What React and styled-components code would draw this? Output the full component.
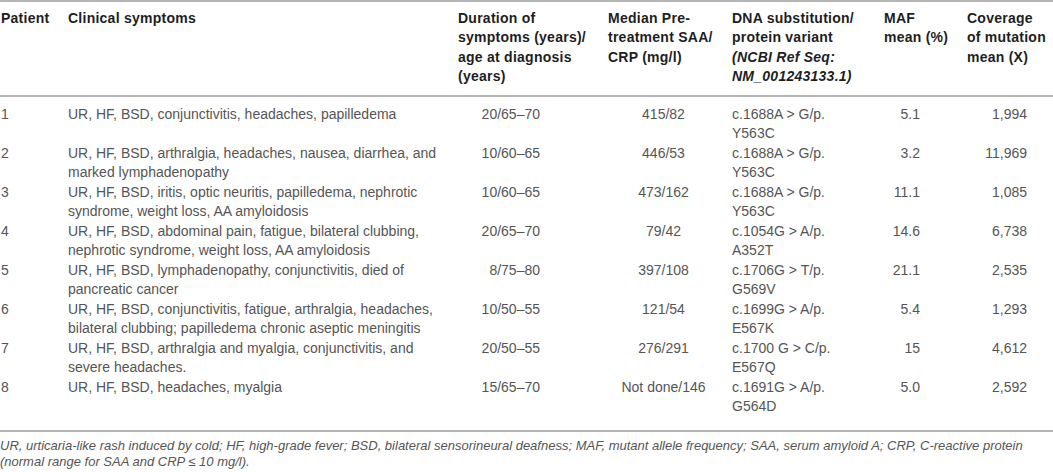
import React from "react";
import styled, { createGlobalStyle } from "styled-components";

const Global = createGlobalStyle`
  body {
    margin: 0;
    background: #fff;
    font-family: "Liberation Sans", Arial, sans-serif;
  }
`;

const COLS = "67px 390px 150px 124px 152px 83px 87px";

const Wrapper = styled.div`
  width: 1053px;
`;

const Table = styled.div`
  border-top: 2px solid #b4b4b4;
  border-bottom: 2px solid #b4b4b4;
`;

const HeaderRow = styled.div`
  display: grid;
  grid-template-columns: ${COLS};
  padding: 7px 0 8px;
  border-bottom: 2px solid #b4b4b4;
`;

const HeadCell = styled.div`
  font-size: 14px;
  font-weight: bold;
  letter-spacing: 0.25px;
  line-height: 19.4px;
  color: #1e1e1e;
  padding-left: ${(p) => p.$pl || 1}px;
  white-space: nowrap;
`;

const Italic = styled.span`
  font-style: italic;
`;

const Body = styled.div`
  padding: 8px 0 13px;
`;

const Row = styled.div`
  display: grid;
  grid-template-columns: ${COLS};
`;

const Cell = styled.div`
  font-size: 14px;
  line-height: 19.5px;
  height: 39px;
  color: #555;
  white-space: nowrap;
  text-align: ${(p) => p.$align || "left"};
  padding-left: ${(p) => p.$pl || 1}px;
  padding-right: ${(p) => p.$pr || 0}px;
`;

const Footnote = styled.p`
  margin: 0;
  padding-top: 6px;
  font-size: 13px;
  line-height: 16.5px;
  font-style: italic;
  color: #555;
`;

const rows = [
  ["1", ["UR, HF, BSD, conjunctivitis, headaches, papilledema"], "20/65–70", "415/82", ["c.1688A > G/p.", "Y563C"], "5.1", "1,994"],
  ["2", ["UR, HF, BSD, arthralgia, headaches, nausea, diarrhea, and", "marked lymphadenopathy"], "10/60–65", "446/53", ["c.1688A > G/p.", "Y563C"], "3.2", "11,969"],
  ["3", ["UR, HF, BSD, iritis, optic neuritis, papilledema, nephrotic", "syndrome, weight loss, AA amyloidosis"], "10/60–65", "473/162", ["c.1688A > G/p.", "Y563C"], "11.1", "1,085"],
  ["4", ["UR, HF, BSD, abdominal pain, fatigue, bilateral clubbing,", "nephrotic syndrome, weight loss, AA amyloidosis"], "20/65–70", "79/42", ["c.1054G > A/p.", "A352T"], "14.6", "6,738"],
  ["5", ["UR, HF, BSD, lymphadenopathy, conjunctivitis, died of", "pancreatic cancer"], "8/75–80", "397/108", ["c.1706G > T/p.", "G569V"], "21.1", "2,535"],
  ["6", ["UR, HF, BSD, conjunctivitis, fatigue, arthralgia, headaches,", "bilateral clubbing; papilledema chronic aseptic meningitis"], "10/50–55", "121/54", ["c.1699G > A/p.", "E567K"], "5.4", "1,293"],
  ["7", ["UR, HF, BSD, arthralgia and myalgia, conjunctivitis, and", "severe headaches."], "20/50–55", "276/291", ["c.1700 G > C/p.", "E567Q"], "15", "4,612"],
  ["8", ["UR, HF, BSD, headaches, myalgia"], "15/65–70", "Not done/146", ["c.1691G > A/p.", "G564D"], "5.0", "2,592"],
];

const Lines = ({ lines }) =>
  lines.map((l, i) => (
    <React.Fragment key={i}>
      {i > 0 && <br />}
      {l}
    </React.Fragment>
  ));

export default function App() {
  return (
    <Wrapper>
      <Global />
      <Table>
        <HeaderRow>
          <HeadCell>Patient</HeadCell>
          <HeadCell>Clinical symptoms</HeadCell>
          <HeadCell>
            Duration of
            <br />
            symptoms (years)/
            <br />
            age at diagnosis
            <br />
            (years)
          </HeadCell>
          <HeadCell>
            Median Pre-
            <br />
            treatment SAA/
            <br />
            CRP (mg/l)
          </HeadCell>
          <HeadCell>
            DNA substitution/
            <br />
            protein variant
            <br />
            <Italic>(NCBI Ref Seq:</Italic>
            <br />
            <Italic>NM_001243133.1)</Italic>
          </HeadCell>
          <HeadCell>
            MAF
            <br />
            mean (%)
          </HeadCell>
          <HeadCell>
            Coverage
            <br />
            of mutation
            <br />
            mean (X)
          </HeadCell>
        </HeaderRow>
        <Body>
          {rows.map((r) => (
            <Row key={r[0]}>
              <Cell>{r[0]}</Cell>
              <Cell>
                <Lines lines={r[1]} />
              </Cell>
              <Cell $align="right" $pr={67}>{r[2]}</Cell>
              <Cell $align="center" $pr={12}>{r[3]}</Cell>
              <Cell>
                <Lines lines={r[4]} />
              </Cell>
              <Cell $align="right" $pr={46}>{r[5]}</Cell>
              <Cell $align="right" $pr={26}>{r[6]}</Cell>
            </Row>
          ))}
        </Body>
      </Table>
      <Footnote>
        UR, urticaria-like rash induced by cold; HF, high-grade fever; BSD, bilateral sensorineural deafness; MAF, mutant allele frequency; SAA, serum amyloid A; CRP, C-reactive protein
        <br />
        (normal range for SAA and CRP ≤ 10 mg/l).
      </Footnote>
    </Wrapper>
  );
}
